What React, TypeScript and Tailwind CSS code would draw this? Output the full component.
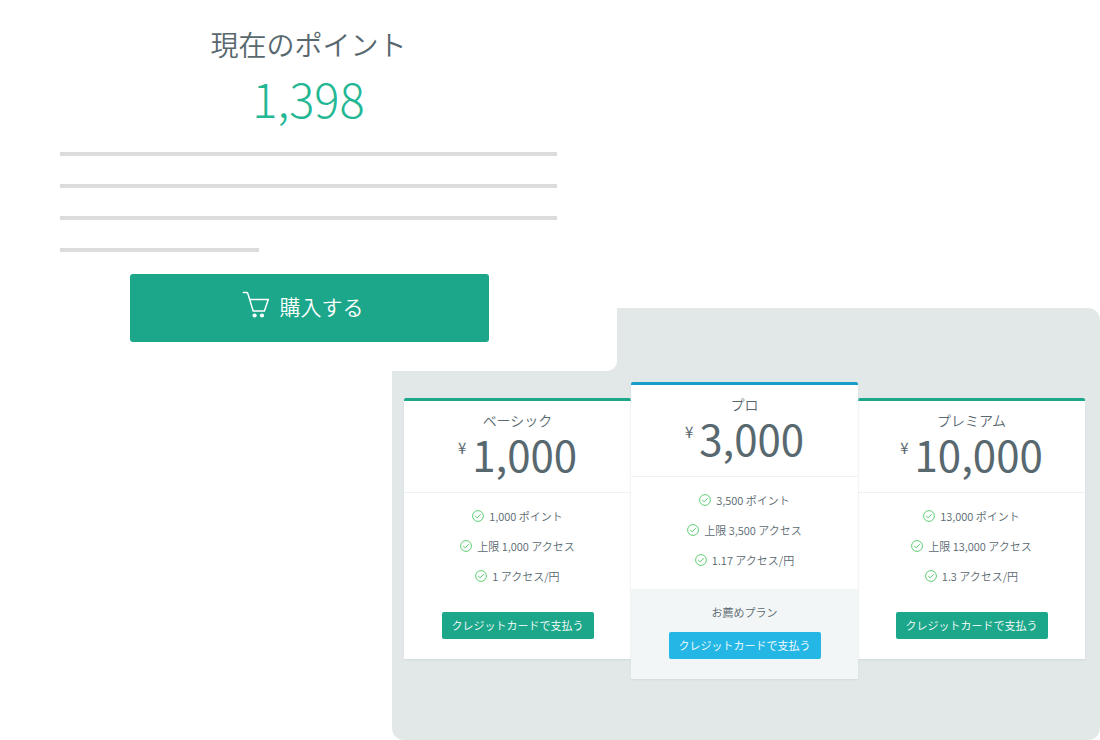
type Plan = {
  name: string;
  price: string;
  features: string[];
  note?: string;
};

const plans: Plan[] = [
  {
    name: 'ベーシック',
    price: '1,000',
    features: ['1,000 ポイント', '上限 1,000 アクセス', '1 アクセス/円'],
  },
  {
    name: 'プロ',
    price: '3,000',
    features: ['3,500 ポイント', '上限 3,500 アクセス', '1.17 アクセス/円'],
    note: 'お薦めプラン',
  },
  {
    name: 'プレミアム',
    price: '10,000',
    features: ['13,000 ポイント', '上限 13,000 アクセス', '1.3 アクセス/円'],
  },
];

function CartIcon() {
  return (
    <svg viewBox="0 0 28 28" className="w-7 h-7 mb-1" fill="none" aria-hidden="true">
      <path
        d="M1.4 1.5h3.2c.6 0 1 .3 1.2.9L11.2 20.1h11.2l3.9-11.6H7.7"
        stroke="currentColor"
        strokeWidth="1.5"
        strokeLinecap="round"
        strokeLinejoin="round"
      />
      <circle cx="12.6" cy="24.5" r="2.1" fill="currentColor" />
      <circle cx="20" cy="24.5" r="2.1" fill="currentColor" />
    </svg>
  );
}

function CheckIcon() {
  return (
    <svg viewBox="0 0 12 12" className="w-3 h-3 text-[#5fcf75]" fill="none" aria-hidden="true">
      <circle cx="6" cy="6" r="5.4" stroke="currentColor" strokeWidth="1" />
      <path
        d="M3.4 6.2l1.8 1.7 3.3-3.5"
        stroke="currentColor"
        strokeWidth="1"
        strokeLinecap="round"
        strokeLinejoin="round"
      />
    </svg>
  );
}

function PayButton({ featured }: { featured: boolean }) {
  return (
    <button
      type="button"
      className={`px-[10px] pb-px rounded-xs text-[11px] leading-[26px] font-[350] text-white whitespace-nowrap ${
        featured ? 'bg-[#24b7e5]' : 'bg-[#1ca68a]'
      }`}
    >
      クレジットカードで支払う
    </button>
  );
}

function PlanCard({ plan }: { plan: Plan }) {
  const featured = Boolean(plan.note);

  return (
    <article
      className={`text-center bg-white rounded-t-xs border-t-3 shadow-[0_1px_2px_#cfd9dc] ${
        featured ? 'relative border-[#189ec8]' : 'mt-4 border-[#1ca68a]'
      }`}
    >
      <header className="pt-[9px] pb-[15px] border-b border-[#edf1f2]">
        <h2 className="text-[14px] leading-5 font-[350]">{plan.name}</h2>
        <p className="flex justify-center gap-[6px]">
          <span className="text-[15px] leading-[35px]">¥</span>
          <span className="text-[42px] leading-[47px]">{plan.price}</span>
        </p>
      </header>

      <ul className="pt-2 pb-[14px] text-[11px] leading-[30px] font-[350]">
        {plan.features.map((feature) => (
          <li key={feature} className="flex items-center justify-center gap-[5px]">
            <CheckIcon />
            {feature}
          </li>
        ))}
      </ul>

      {plan.note ? (
        <footer className="flex flex-col items-center pt-[13px] pb-5 bg-[#f3f6f6]">
          <p className="mb-[10px] text-[11px] leading-5 font-[350]">{plan.note}</p>
          <PayButton featured />
        </footer>
      ) : (
        <footer className="flex flex-col items-center pt-[7px] pb-5">
          <PayButton featured={false} />
        </footer>
      )}
    </article>
  );
}

export default function App() {
  return (
    <main
      lang="ja"
      className="grid grid-cols-[392fr_225fr_483fr] bg-white text-[#58686f] font-['Noto_Sans_CJK_JP',sans-serif]"
    >
      <section className="relative z-10 col-start-1 col-span-2 row-start-1 flex flex-col px-[60px] pt-6 pb-[29px] bg-white rounded-br-[10px]">
        <h1 className="text-[28px] leading-10 font-[350] text-center">現在のポイント</h1>
        <p className="pt-1 text-[47px] leading-[60px] font-light text-center text-[#23b794]">1,398</p>
        <div className="flex flex-col gap-7 pt-6 pb-[22px]">
          <div className="h-1 bg-[#dcdcdc]" />
          <div className="h-1 bg-[#dcdcdc]" />
          <div className="h-1 bg-[#dcdcdc]" />
          <div className="h-1 w-2/5 bg-[#dcdcdc]" />
        </div>
        <button
          type="button"
          className="flex items-center justify-center gap-[10px] h-[68px] ml-[70px] mr-[68px] pr-[14px] pb-[2px] rounded-[3px] bg-[#1ca68a] text-[21px] font-[350] text-white"
        >
          <CartIcon />
          購入する
        </button>
      </section>

      <section className="col-start-2 col-span-2 row-start-2 -mt-[63px] pl-3 pr-[15px] pt-[74px] pb-[61px] rounded-xl bg-[#e2e8e8]">
        <div className="grid grid-cols-3 items-start">
          {plans.map((plan) => (
            <PlanCard key={plan.name} plan={plan} />
          ))}
        </div>
      </section>
    </main>
  );
}
